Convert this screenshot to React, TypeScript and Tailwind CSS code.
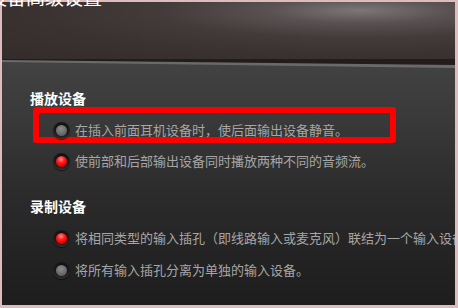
import React from "react";

type RadioProps = { checked?: boolean };

function Radio({ checked }: RadioProps) {
    return (
        <span className="flex items-center justify-center shrink-0 w-[17px] h-[17px] rounded-full bg-[radial-gradient(circle_at_50%_35%,#0c0c0c_0%,#1a1a1a_55%,#3c3c3c_85%,#4a4a4a_100%)] shadow-[0_1px_1px_rgba(0,0,0,0.6)]">
            {checked ? (
                <span className="block w-[11px] h-[11px] rounded-full bg-[radial-gradient(circle_at_45%_30%,#ff9090_0%,#ff2020_35%,#ee0000_65%,#a00000_100%)]" />
            ) : (
                <span className="block w-[11px] h-[11px] rounded-full bg-[radial-gradient(circle_at_45%_35%,#8c8c8c_0%,#6e6e6e_50%,#4c4c4c_100%)]" />
            )}
        </span>
    );
}

function Option({ checked, text }: { checked?: boolean; text: string }) {
    return (
        <div className="flex items-center h-[17px] gap-[5px] whitespace-nowrap">
            <Radio checked={checked} />
            <span className="text-[13px] leading-[17px] text-[#a6a6a6] mb-[3px]">{text}</span>
        </div>
    );
}

export default function App() {
    const font = { fontFamily: '"Noto Sans CJK SC", "Noto Sans", sans-serif' };

    return (
        <div className="relative w-[458px] h-[308px] bg-[#dcbcbc] pt-[2px] pl-[2px] pr-[3px] pb-[3px] overflow-hidden" style={font}>
            <div className="flex flex-col w-full h-full bg-[#241c1c] overflow-hidden">
                <div className="h-[57px] shrink-0 bg-[radial-gradient(ellipse_at_79%_15%,#7c7676_0%,#5a5252_18%,#433a3a_40%,#3a3131_65%,#342b2b_100%)]" />
                <div className="flex-1 bg-[#6a6a6a] [clip-path:polygon(0_1px,100%_6px,100%_100%,0_100%)]">
                    <div className="h-full pt-[31px] pl-[28px] bg-[linear-gradient(180deg,#444343_0%,#3a3939_25%,#2c2b2b_55%,#1d1d1d_100%)] [clip-path:polygon(0_3px,100%_9px,100%_100%,0_100%)] overflow-hidden">
                        <div className="h-[16px] text-[14px] leading-[16px] font-bold text-white">播放设备</div>
                        <div className="mt-[1px] ml-[3px] w-[363px] h-[36px] border-[6px] border-[#ff0000] rounded-[3px]">
                            <div className="pl-[14px] pt-[9px]">
                                <Option text="在插入前面耳机设备时，使后面输出设备静音。" />
                            </div>
                        </div>
                        <div className="mt-[10px] ml-[23px]">
                            <Option checked text="使前部和后部输出设备同时播放两种不同的音频流。" />
                        </div>
                        <div className="mt-[28px] h-[16px] text-[14px] leading-[16px] font-bold text-white">录制设备</div>
                        <div className="mt-[16px] ml-[23px]">
                            <Option checked text="将相同类型的输入插孔（即线路输入或麦克风）联结为一个输入设备。" />
                        </div>
                        <div className="mt-[15px] ml-[23px]">
                            <Option text="将所有输入插孔分离为单独的输入设备。" />
                        </div>
                    </div>
                </div>
            </div>
            <div className="absolute top-[-13px] left-[-12px] text-[19px] leading-[20px] text-white whitespace-nowrap">设备高级设置</div>
        </div>
    );
}
